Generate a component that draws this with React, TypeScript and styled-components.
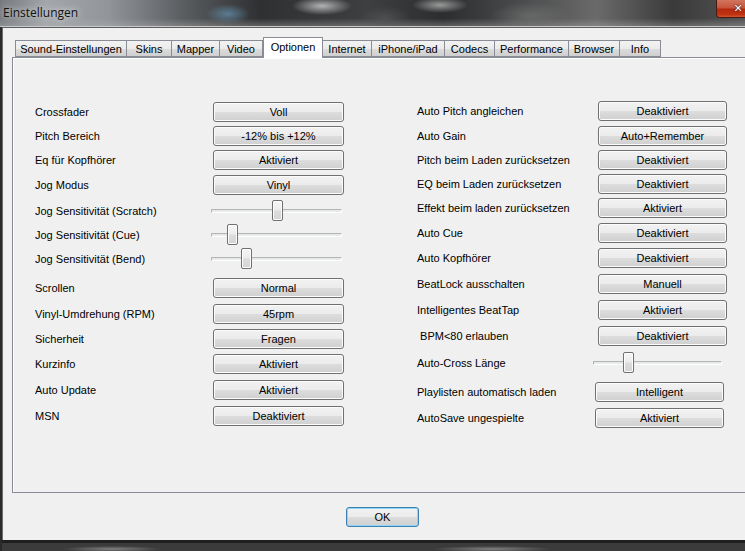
import styled, { createGlobalStyle } from "styled-components";

const GlobalStyle = createGlobalStyle`
  html, body {
    margin: 0;
    padding: 0;
    background: #1b1b1b;
    overflow: hidden;
  }
  body {
    font-family: "Liberation Sans", Arial, sans-serif;
    font-size: 11px;
    color: #000;
  }
`;

type Row = {
  label: string;
  value?: string;
  slider?: number;
  h: number;
  mt?: number;
  shift?: number;
};

const tabs = [
  { name: "Sound-Einstellungen", w: 112 },
  { name: "Skins", w: 45 },
  { name: "Mapper", w: 48 },
  { name: "Video", w: 43 },
  { name: "Optionen", w: 60, active: true },
  { name: "Internet", w: 49 },
  { name: "iPhone/iPad", w: 73 },
  { name: "Codecs", w: 50 },
  { name: "Performance", w: 74 },
  { name: "Browser", w: 51 },
  { name: "Info", w: 41 },
];

const leftRows: Row[] = [
  { label: "Crossfader", value: "Voll", h: 24 },
  { label: "Pitch Bereich", value: "-12% bis +12%", h: 24 },
  { label: "Eq für Kopfhörer", value: "Aktiviert", h: 24 },
  { label: "Jog Modus", value: "Vinyl", h: 26 },
  { label: "Jog Sensitivität (Scratch)", slider: 0.508, h: 25, shift: -2 },
  { label: "Jog Sensitivität (Cue)", slider: 0.133, h: 24, shift: -2 },
  { label: "Jog Sensitivität (Bend)", slider: 0.25, h: 24, shift: -2 },
  { label: "Scrollen", value: "Normal", h: 26, mt: 4 },
  { label: "Vinyl-Umdrehung (RPM)", value: "45rpm", h: 26 },
  { label: "Sicherheit", value: "Fragen", h: 24 },
  { label: "Kurzinfo", value: "Aktiviert", h: 26 },
  { label: "Auto Update", value: "Aktiviert", h: 25 },
  { label: "MSN", value: "Deaktiviert", h: 27 },
];

const rightRows: Row[] = [
  { label: "Auto Pitch angleichen", value: "Deaktiviert", h: 24 },
  { label: "Auto Gain", value: "Auto+Remember", h: 25 },
  { label: "Pitch beim Laden zurücksetzen", value: "Deaktiviert", h: 24 },
  { label: "EQ beim Laden zurücksetzen", value: "Deaktiviert", h: 24 },
  { label: "Effekt beim laden zurücksetzen", value: "Aktiviert", h: 24 },
  { label: "Auto Cue", value: "Deaktiviert", h: 26 },
  { label: "Auto Kopfhörer", value: "Deaktiviert", h: 24 },
  { label: "BeatLock ausschalten", value: "Manuell", h: 28 },
  { label: "Intelligentes BeatTap", value: "Aktiviert", h: 24 },
  { label: "\u00a0BPM<80 erlauben", value: "Deaktiviert", h: 28 },
  { label: "Auto-Cross Länge", slider: 0.25, h: 26, shift: -5 },
  { label: "Playlisten automatisch laden", value: "Intelligent", h: 32, shift: -3 },
  { label: "AutoSave ungespielte", value: "Aktiviert", h: 20, shift: -3 },
];

const SettingsColumn = ({ rows, labelWidth, controlWidth, top }: { rows: Row[]; labelWidth: number; controlWidth: number; top: number }) => (
  <ColumnStyled $top={top}>
    {rows.map((row) => (
      <RowStyled key={row.label} $h={row.h} $mt={row.mt || 0}>
        <LabelStyled $w={labelWidth}>{row.label}</LabelStyled>
        <ControlStyled $w={controlWidth} $shift={row.shift || 0}>
          {row.slider !== undefined ? (
            <SliderStyled>
              <TrackStyled />
              <ThumbStyled style={{ left: `${row.slider * 120}px` }} />
            </SliderStyled>
          ) : (
            <ButtonStyled>{row.value}</ButtonStyled>
          )}
        </ControlStyled>
      </RowStyled>
    ))}
  </ColumnStyled>
);

const App = () => {
  return (
    <>
      <GlobalStyle />
      <WindowStyled>
        <TitleBarStyled>
          <TitleStyled>Einstellungen</TitleStyled>
          <CloseButtonStyled>
            <CloseGlyphStyled>✕</CloseGlyphStyled>
          </CloseButtonStyled>
        </TitleBarStyled>
        <BodyStyled>
          <TabControlStyled>
            <TabRowStyled>
              {tabs.map((tab) => (
                <TabStyled key={tab.name} $w={tab.w} $active={!!tab.active}>
                  {tab.name}
                </TabStyled>
              ))}
            </TabRowStyled>
            <PanelStyled>
              <SettingsColumn rows={leftRows} labelWidth={178} controlWidth={131} top={0} />
              <SettingsColumn rows={rightRows} labelWidth={181} controlWidth={129} top={-1} />
            </PanelStyled>
          </TabControlStyled>
          <FooterStyled>
            <OkButtonStyled>OK</OkButtonStyled>
          </FooterStyled>
        </BodyStyled>
        <BottomFrameStyled />
      </WindowStyled>
    </>
  );
};

export default App;

const WindowStyled = styled.div`
  width: 765px;
  height: 551px;
  display: flex;
  flex-direction: column;
  background: #2a2a2a;
`;

const TitleBarStyled = styled.div`
  height: 26px;
  flex-shrink: 0;
  display: flex;
  justify-content: space-between;
  align-items: flex-start;
  border-bottom: 1px solid #c9c9c9;
  background:
    radial-gradient(ellipse 22px 10px at 228px 14px, rgba(110, 170, 210, 0.55), transparent),
    radial-gradient(ellipse 30px 9px at 322px 6px, rgba(220, 220, 220, 0.75), transparent),
    radial-gradient(ellipse 28px 8px at 440px 5px, rgba(200, 200, 200, 0.7), transparent),
    radial-gradient(ellipse 40px 14px at 530px 16px, rgba(120, 120, 120, 0.6), transparent),
    radial-gradient(ellipse 26px 12px at 385px 18px, rgba(90, 90, 90, 0.6), transparent),
    linear-gradient(to bottom, rgba(255, 255, 255, 0) 70%, rgba(180, 180, 180, 0.35) 100%),
    linear-gradient(to right, #75797e 0%, #a3a7ab 6%, #92969a 14%, #5a5d60 24%, #2e3032 34%, #3d3f41 48%, #2c2d2e 58%, #4a4b4c 68%, #6a6a6a 78%, #3a3a3a 88%, #5a5a5a 100%);
`;

const TitleStyled = styled.div`
  font-family: "Open Sans", "Noto Sans", sans-serif;
  font-size: 12px;
  line-height: 16px;
  margin: 5px 0 0 3px;
  color: #111;
  text-shadow: 0 0 6px rgba(230, 230, 230, 0.9), 0 0 10px rgba(230, 230, 230, 0.6);
`;

const CloseButtonStyled = styled.div`
  width: 44px;
  height: 18px;
  flex-shrink: 0;
  margin-right: 5px;
  box-sizing: border-box;
  display: flex;
  align-items: center;
  justify-content: center;
  border: 1px solid #4a1a12;
  border-top: none;
  border-radius: 0 0 4px 4px;
  background-color: #c03a1e;
  background-image: linear-gradient(to bottom, #d27560 0%, #c8553c 45%, #b5280e 55%, #c03212 85%, #d25530 100%);
`;

const CloseGlyphStyled = styled.span`
  font-family: "DejaVu Sans", sans-serif;
  font-size: 11px;
  font-weight: 700;
  line-height: 1;
  color: #ffffff;
  text-shadow: 0 0 2px #3b1a14, 0 0 1px #3b1a14;
`;

const BodyStyled = styled.div`
  height: 513px;
  flex-shrink: 0;
  margin: 0 2px;
  display: flex;
  flex-direction: column;
  background: #f0f0f0;
  border-top: 1px solid #5d5d5d;
  border-left: 1px solid #6b6b6b;
  border-right: 1px solid #6b6b6b;
  box-sizing: border-box;
`;

const TabControlStyled = styled.div`
  margin: 9px 8px 0 9px;
  display: flex;
  flex-direction: column;
`;

const TabRowStyled = styled.div`
  height: 21px;
  display: flex;
  align-items: flex-end;
  padding-left: 3px;
  position: relative;
  z-index: 1;
  margin-bottom: -1px;
`;

const TabStyled = styled.div<{ $w: number; $active: boolean }>`
  width: ${({ $w }) => $w}px;
  height: ${({ $active }) => ($active ? 21 : 17)}px;
  margin-bottom: ${({ $active }) => ($active ? 0 : 1)}px;
  box-sizing: border-box;
  display: flex;
  align-items: center;
  justify-content: center;
  font-size: 11px;
  padding-bottom: ${({ $active }) => ($active ? 2 : 0)}px;
  border: 1px solid #898c95;
  border-bottom: ${({ $active }) => ($active ? "none" : "1px solid #898c95")};
  border-left-width: ${({ $active }) => ($active ? 1 : 0)}px;
  background: ${({ $active }) =>
    $active ? "#ffffff" : "linear-gradient(to bottom, #f2f2f2 0%, #ebebeb 50%, #dddddd 51%, #cfcfcf 100%)"};
  &:first-child {
    border-left-width: 1px;
  }
`;

const PanelStyled = styled.div`
  height: 436px;
  box-sizing: border-box;
  display: flex;
  align-items: flex-start;
  gap: 73px;
  padding: 42px 0 0 22px;
  border: 1px solid #898c95;
  border-right: none;
  background: #f0f0f0;
  box-shadow: inset 1px 1px 0 #ffffff;
`;

const ColumnStyled = styled.div<{ $top: number }>`
  display: flex;
  flex-direction: column;
  margin-top: ${({ $top }) => $top}px;
`;

const RowStyled = styled.div<{ $h: number; $mt: number }>`
  height: ${({ $h }) => $h}px;
  margin-top: ${({ $mt }) => $mt}px;
  display: flex;
  align-items: center;
`;

const LabelStyled = styled.div<{ $w: number }>`
  width: ${({ $w }) => $w}px;
  flex-shrink: 0;
  font-size: 11px;
  white-space: nowrap;
`;

const ControlStyled = styled.div<{ $w: number; $shift: number }>`
  width: ${({ $w }) => $w}px;
  margin-left: ${({ $shift }) => $shift}px;
  display: flex;
`;

const ButtonStyled = styled.div`
  width: 100%;
  height: 20px;
  box-sizing: border-box;
  display: flex;
  align-items: center;
  justify-content: center;
  font-size: 11px;
  border: 1px solid #707070;
  border-radius: 3px;
  background: linear-gradient(to bottom, #f2f2f2 0%, #ebebeb 50%, #dddddd 51%, #cfcfcf 100%);
  box-shadow: inset 0 0 0 1px #fcfcfc;
`;

const SliderStyled = styled.div`
  position: relative;
  width: 131px;
  height: 22px;
  display: flex;
  align-items: center;
`;

const TrackStyled = styled.div`
  width: 100%;
  height: 4px;
  box-sizing: border-box;
  border: 1px solid #b4b4b4;
  border-bottom-color: #ffffff;
  border-right-color: #ffffff;
  background: #e7eaea;
`;

const ThumbStyled = styled.div`
  position: absolute;
  top: 0;
  width: 11px;
  height: 21px;
  box-sizing: border-box;
  border: 1px solid #707070;
  border-radius: 2px;
  background: linear-gradient(to bottom, #f6f6f6 0%, #ececec 45%, #dcdcdc 55%, #d4d4d4 100%);
  box-shadow: inset 0 0 0 1px #fdfdfd;
`;

const FooterStyled = styled.div`
  display: flex;
  justify-content: center;
  padding-top: 14px;
`;

const OkButtonStyled = styled.div`
  width: 73px;
  height: 20px;
  box-sizing: border-box;
  display: flex;
  align-items: center;
  justify-content: center;
  font-size: 11px;
  border: 1px solid #3c7fb1;
  border-radius: 3px;
  background: linear-gradient(to bottom, #f2f2f2 0%, #ebebeb 50%, #dddddd 51%, #cfcfcf 100%);
  box-shadow: inset 0 0 0 1px #8fd7f6;
`;

const BottomFrameStyled = styled.div`
  flex: 1;
  margin: 0 2px;
  border-top: 3px solid #1f1f1f;
  background:
    radial-gradient(ellipse 50px 3px at 110px 6px, rgba(200, 200, 200, 0.5), transparent),
    radial-gradient(ellipse 60px 3px at 490px 6px, rgba(200, 200, 200, 0.5), transparent),
    #3b3b3b;
`;
